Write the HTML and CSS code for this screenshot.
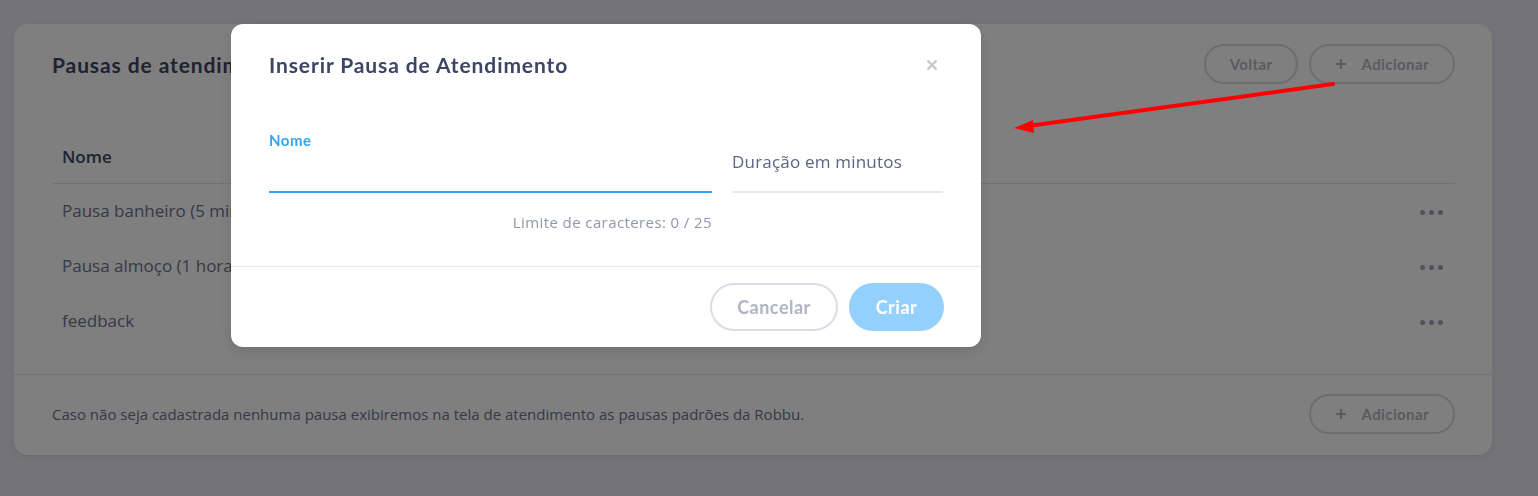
FILE: index.html
```html
<!DOCTYPE html>
<html lang="pt-BR">
<head>
<meta charset="utf-8">
<title>Pausas de atendimento</title>
<link rel="stylesheet" href="styles.css">
</head>
<body>
<main class="card">
  <header class="card-head">
    <h1 class="card-title">Pausas de atendimento</h1>
    <div class="head-actions">
      <button class="pill">Voltar</button>
      <button class="pill"><svg class="plus" viewBox="0 0 12 12"><path d="M6 1v10M1 6h10"/></svg>Adicionar</button>
    </div>
  </header>
  <table class="table">
    <thead>
      <tr><th>Nome</th><th></th></tr>
    </thead>
    <tbody>
      <tr><td>Pausa banheiro (5 minutos)</td><td class="more"><span class="dots"><i></i><i></i><i></i></span></td></tr>
      <tr><td>Pausa almoço (1 hora)</td><td class="more"><span class="dots"><i></i><i></i><i></i></span></td></tr>
      <tr><td>feedback</td><td class="more"><span class="dots"><i></i><i></i><i></i></span></td></tr>
    </tbody>
  </table>
  <footer class="card-foot">
    <p class="note">Caso não seja cadastrada nenhuma pausa exibiremos na tela de atendimento as pausas padrões da Robbu.</p>
    <button class="pill"><svg class="plus" viewBox="0 0 12 12"><path d="M6 1v10M1 6h10"/></svg>Adicionar</button>
  </footer>
</main>

<div class="backdrop"></div>

<section class="modal">
  <div class="modal-head">
    <h2 class="modal-title">Inserir Pausa de Atendimento</h2>
    <svg class="close" viewBox="0 0 12 12"><path d="M1.5 1.5l9 9M10.5 1.5l-9 9"/></svg>
  </div>
  <div class="modal-body">
    <div class="field field-name">
      <label class="label">Nome</label>
      <div class="input active"></div>
      <div class="counter">Limite de caracteres: 0 / 25</div>
    </div>
    <div class="field field-dur">
      <div class="input"><span class="placeholder">Duração em minutos</span></div>
    </div>
  </div>
  <div class="modal-foot">
    <button class="btn btn-ghost">Cancelar</button>
    <button class="btn btn-primary">Criar</button>
  </div>
</section>

<svg class="arrow" width="1538" height="496" viewBox="0 0 1538 496">
  <path d="M1333 84 L1028 126" stroke="#ff0000" stroke-width="4" stroke-linecap="round" fill="none"/>
  <path d="M1014 128 L1033 120 L1034 133 Z" fill="#ff0000"/>
</svg>
</body>
</html>
```

FILE: styles.css
```css
* { box-sizing: border-box; }

html, body {
  margin: 0;
  padding: 0;
}

body {
  background: #e6e6f0;
  width: 1538px;
  height: 496px;
  overflow: hidden;
  font-family: "Open Sans", "Noto Sans", sans-serif;
  color: #3d4566;
  position: relative;
}

button {
  font: inherit;
  background: none;
  cursor: pointer;
}

.card {
  margin: 24px 46px 0 14px;
  background: #ffffff;
  border-radius: 14px;
  box-shadow: 0 2px 6px rgba(0, 0, 0, 0.06);
}

.card-head {
  display: flex;
  justify-content: space-between;
  align-items: center;
  padding: 20px 37px 0 38px;
}

.card-title {
  margin: 0;
  font-family: "Lato", sans-serif;
  font-weight: 700;
  font-size: 21px;
  color: #3d4566;
  letter-spacing: 0.9px;
}

.head-actions {
  display: flex;
  gap: 11px;
}

.pill {
  height: 40px;
  border: 2px solid #dadbe2;
  border-radius: 20px;
  padding: 0 24px;
  display: flex;
  align-items: center;
  gap: 14px;
  font-family: "Lato", sans-serif;
  font-weight: 700;
  font-size: 15px;
  color: #b4b6c4;
  letter-spacing: 0.4px;
}

.plus {
  width: 12px;
  height: 12px;
  stroke: #b4b6c4;
  stroke-width: 2.2;
  fill: none;
}

.table {
  margin: 47px 37px 0 38px;
  width: calc(100% - 75px);
  border-collapse: collapse;
}

.table th {
  text-align: left;
  height: 52px;
  padding: 0 10px;
  font-weight: 600;
  font-size: 17px;
  color: #3d4566;
  border-bottom: 1px solid #e3e4ea;
}

.table td {
  height: 55px;
  padding: 0 10px;
  font-size: 17px;
  color: #6c7390;
}

.table td.more {
  text-align: right;
  padding-right: 12px;
}

.dots {
  display: inline-flex;
  gap: 4px;
  vertical-align: middle;
}

.dots i {
  width: 5px;
  height: 5px;
  border-radius: 50%;
  background: #a0a4bc;
}

.card-foot {
  margin-top: 26px;
  border-top: 1px solid #e3e4ea;
  display: flex;
  justify-content: space-between;
  align-items: center;
  padding: 19px 37px 21px 38px;
}

.note {
  margin: 0;
  font-size: 15px;
  color: #6c7390;
}

.backdrop {
  position: fixed;
  inset: 0;
  background: rgba(0, 0, 0, 0.5);
}

.modal {
  position: fixed;
  left: 231px;
  top: 24px;
  width: 750px;
  background: #ffffff;
  border-radius: 12px;
  box-shadow: 0 4px 14px rgba(0, 0, 0, 0.12);
}

.modal-head {
  display: flex;
  justify-content: space-between;
  align-items: center;
  padding: 28px 43px 0 38px;
}

.modal-title {
  margin: 0;
  font-family: "Lato", sans-serif;
  font-weight: 700;
  font-size: 21px;
  line-height: 26px;
  color: #3d4566;
  letter-spacing: 0.9px;
}

.close {
  width: 12px;
  height: 12px;
  stroke: #c4c6d0;
  stroke-width: 2.4;
  fill: none;
}

.modal-body {
  display: grid;
  grid-template-columns: 443px 211px;
  column-gap: 20px;
  padding: 53px 37px 0 38px;
  height: 189px;
  border-bottom: 1px solid #e8e9ee;
}

.field {
  display: flex;
  flex-direction: column;
}

.label {
  font-family: "Lato", sans-serif;
  font-weight: 700;
  font-size: 15px;
  line-height: 18px;
  letter-spacing: 0.5px;
  color: #33a4f4;
}

.input {
  height: 44px;
  border-bottom: 2px solid #e8e9ee;
  display: flex;
  align-items: center;
}

.input.active {
  border-bottom-color: #33a4f4;
}

.field-dur .input {
  height: 62px;
}

.placeholder {
  font-size: 17px;
  letter-spacing: 0.2px;
  color: #5d6480;
}

.counter {
  margin-top: 19px;
  text-align: right;
  font-size: 15px;
  letter-spacing: 0.4px;
  color: #9197ab;
}

.modal-foot {
  display: flex;
  justify-content: flex-end;
  gap: 11px;
  padding: 16px 37px 16px;
}

.btn {
  height: 48px;
  border-radius: 24px;
  font-family: "Lato", sans-serif;
  font-weight: 700;
  font-size: 18px;
  letter-spacing: 0.5px;
  padding: 0;
}

.btn-ghost {
  border: 2px solid #dcdde4;
  color: #b0b3c3;
  width: 128px;
}

.btn-primary {
  border: none;
  background: #93d0fc;
  color: #ffffff;
  width: 95px;
}

.arrow {
  position: absolute;
  left: 0;
  top: 0;
  pointer-events: none;
}
```
